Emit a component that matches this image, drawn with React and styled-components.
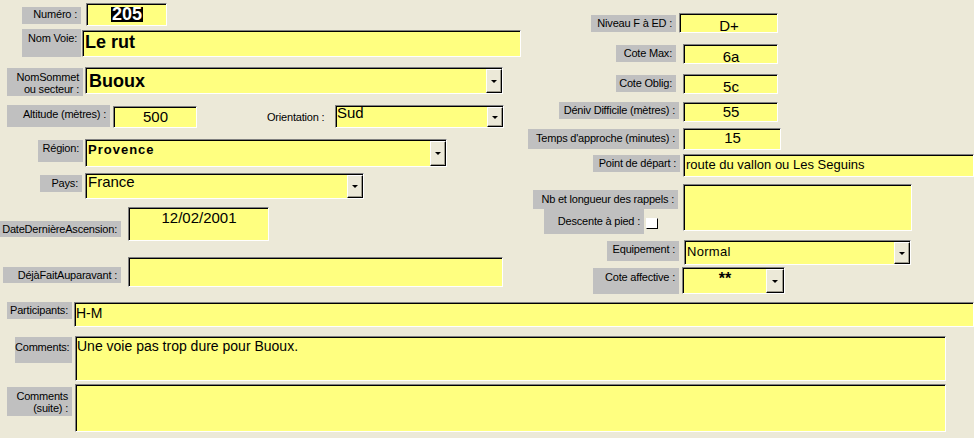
import React from "react";
import styled, { createGlobalStyle } from "styled-components";

const Global = createGlobalStyle`
  html, body { margin: 0; padding: 0; background: #ECE9D8; }
  body { font-family: "Liberation Sans", Arial, sans-serif; color: #000; }
`;

const Form = styled.div`
  width: 974px;
  height: 438px;
  overflow: hidden;
  background: #ECE9D8;
  display: flex;
  flex-direction: column;
`;

const Top = styled.div`
  display: flex;
  height: 294px;
  flex-shrink: 0;
`;

const Column = styled.div`
  display: flex;
  flex-direction: column;
  width: ${(p) => p.$w}px;
  padding-top: ${(p) => p.$pt || 0}px;
  flex-shrink: 0;
`;

const Bottom = styled.div`
  display: flex;
  flex-direction: column;
  margin-top: 8px;
`;

const Row = styled.div`
  display: flex;
  align-items: flex-start;
  height: ${(p) => p.$h}px;
  padding-left: ${(p) => p.$pl || 0}px;
  flex-shrink: 0;
`;

const Stack = styled.div`
  display: flex;
  flex-direction: column;
  width: ${(p) => p.$w}px;
  flex-shrink: 0;
`;

const SubRow = styled.div`
  display: flex;
  align-items: flex-start;
  padding-left: ${(p) => p.$pl || 0}px;
`;

const Label = styled.div`
  box-sizing: border-box;
  width: ${(p) => p.$w}px;
  height: ${(p) => p.$h}px;
  margin-top: ${(p) => p.$mt || 0}px;
  margin-left: ${(p) => p.$ml || 0}px;
  padding: ${(p) => p.$pt ?? 2}px 4px 0 0;
  background: #C0C0C0;
  color: #000;
  font-family: "Liberation Sans", Arial, sans-serif;
  font-size: 11px;
  letter-spacing: -0.2px;
  line-height: ${(p) => p.$lh || 13}px;
  text-align: right;
  white-space: nowrap;
  flex-shrink: 0;
`;

const Caption = styled.div`
  width: ${(p) => p.$w}px;
  margin-top: ${(p) => p.$mt || 0}px;
  margin-left: ${(p) => p.$ml || 0}px;
  font-family: "Liberation Sans", Arial, sans-serif;
  font-size: 11px;
  letter-spacing: -0.2px;
  line-height: 13px;
  white-space: nowrap;
  flex-shrink: 0;
`;

const Field = styled.div`
  box-sizing: border-box;
  width: ${(p) => p.$w}px;
  height: ${(p) => p.$h}px;
  margin-top: ${(p) => p.$mt || 0}px;
  margin-left: ${(p) => p.$ml || 0}px;
  background: #FFFF80;
  border: 1px solid;
  border-color: #808080 #ffffff #ffffff #808080;
  box-shadow: inset 1px 1px 0 #000;
  display: flex;
  align-items: flex-start;
  overflow: hidden;
  flex-shrink: 0;
`;

const Value = styled.span`
  flex: 1;
  min-width: 0;
  padding: ${(p) => p.$pt ?? 1}px 2px 0 ${(p) => p.$pl ?? 3}px;
  font-family: "Liberation Sans", Arial, sans-serif;
  font-size: ${(p) => p.$size || 14}px;
  font-weight: ${(p) => (p.$bold ? 700 : 400)};
  line-height: ${(p) => p.$lh || 14}px;
  letter-spacing: ${(p) => p.$ls || 0}px;
  text-align: ${(p) => p.$align || "left"};
  white-space: nowrap;
  color: #000;
`;

const Selected = styled.span`
  display: inline-block;
  background: #000;
  color: #fff;
  line-height: 15px;
  padding: 0 1px;
`;

const DropButton = styled.div`
  box-sizing: border-box;
  width: ${(p) => p.$w || 16}px;
  align-self: stretch;
  margin: 1px 0 0 0;
  background: #ECE9D8;
  border: 1px solid;
  border-color: #ffffff #000 #000 #ffffff;
  box-shadow: inset -1px -1px 0 #9d9a8c;
  display: flex;
  align-items: center;
  justify-content: center;
  flex-shrink: 0;
  &::after {
    content: "";
    width: 0;
    height: 0;
    border-left: 3px solid transparent;
    border-right: 3px solid transparent;
    border-top: 3px solid #000;
  }
`;

const Check = styled.div`
  box-sizing: border-box;
  width: 12px;
  height: 11px;
  margin-top: ${(p) => p.$mt || 0}px;
  margin-left: ${(p) => p.$ml || 0}px;
  background: #fff;
  border: 1px solid;
  border-color: #ffffff #000 #000 #ffffff;
  flex-shrink: 0;
`;

function Combo({ w, h, ml, mt, btn, children }) {
  return (
    <Field $w={w} $h={h} $ml={ml} $mt={mt}>
      {children}
      <DropButton $w={btn} />
    </Field>
  );
}

export default function App() {
  return (
    <>
      <Global />
      <Form>
        <Top>
          <Column $w={522} $pt={3}>
            <Row $h={26} $pl={22}>
              <Label $w={59} $h={17} $mt={4} $pt={1}>Numéro :</Label>
              <Field $w={81} $h={23} $ml={5}>
                <Value $size={18} $bold $align="center" $pt={3} $lh={15}>
                  <Selected>205</Selected>
                </Value>
              </Field>
            </Row>
            <Row $h={38} $pl={22}>
              <Label $w={59} $h={28} $pt={3}>Nom Voie:</Label>
              <Field $w={439} $h={27} $ml={1} $mt={1}>
                <Value $size={18} $bold $lh={20} $pt={1} $pl={2}>Le rut</Value>
              </Field>
            </Row>
            <Row $h={37} $pl={7}>
              <Label $w={76} $h={28} $mt={1} $pt={3} $lh={12}>
                NomSommet
                <br />
                ou secteur :
              </Label>
              <Combo w={418} h={27} ml={2}>
                <Value $size={18} $bold $lh={20} $pt={3} $pl={3}>Buoux</Value>
              </Combo>
            </Row>
            <Row $h={35} $pl={7}>
              <Label $w={103} $h={22} $mt={1} $pt={3}>Altitude (mètres) :</Label>
              <Field $w={84} $h={22} $ml={3} $mt={2}>
                <Value $align="center" $pt={3} $size={15}>500</Value>
              </Field>
              <Caption $w={63} $ml={70} $mt={7}>Orientation :</Caption>
              <Combo w={169} h={23} ml={5} mt={1}>
                <Value $pt={0} $pl={1} $size={15}>Sud</Value>
              </Combo>
            </Row>
            <Row $h={33} $pl={38}>
              <Label $w={45} $h={22} $mt={1} $pt={2}>Région:</Label>
              <Combo w={362} h={28} ml={2}>
                <Value $size={13} $bold $ls={1} $lh={16} $pt={2} $pl={2}>Provence</Value>
              </Combo>
            </Row>
            <Row $h={35} $pl={40}>
              <Label $w={42} $h={17} $mt={3} $pt={2}>Pays:</Label>
              <Combo w={279} h={26} ml={3} mt={1}>
                <Value $size={15} $pt={1} $pl={2}>France</Value>
              </Combo>
            </Row>
            <Row $h={50} $pl={0}>
              <Label $w={121} $h={16} $mt={14} $pt={2}>DateDernièreAscension:</Label>
              <Field $w={141} $h={34} $ml={7}>
                <Value $size={15} $align="center" $pt={3}>12/02/2001</Value>
              </Field>
            </Row>
            <Row $h={30} $pl={3}>
              <Label $w={118} $h={16} $mt={10} $pt={2}>DéjàFaitAuparavant :</Label>
              <Field $w={375} $h={30} $ml={7} />
            </Row>
          </Column>

          <Column $w={452} $pt={13}>
            <Row $h={31} $pl={69}>
              <Label $w={85} $h={17} $mt={2} $pt={2}>Niveau F à ED :</Label>
              <Field $w={99} $h={20} $ml={3}>
                <Value $size={15} $lh={16} $align="center" $pt={4}>D+</Value>
              </Field>
            </Row>
            <Row $h={30} $pl={94}>
              <Label $w={60} $h={17} $mt={1} $pt={2}>Cote Max:</Label>
              <Field $w={95} $h={20} $ml={7}>
                <Value $size={15} $lh={16} $align="center" $pt={4}>6a</Value>
              </Field>
            </Row>
            <Row $h={28} $pl={94}>
              <Label $w={60} $h={17} $mt={1} $pt={2}>Cote Oblig:</Label>
              <Field $w={95} $h={20} $ml={7}>
                <Value $size={15} $lh={16} $align="center" $pt={4}>5c</Value>
              </Field>
            </Row>
            <Row $h={26} $pl={37}>
              <Label $w={120} $h={17} $pt={2}>Déniv Difficile (mètres) :</Label>
              <Field $w={95} $h={20} $ml={4}>
                <Value $size={15} $lh={16} $align="center" $pt={1}>55</Value>
              </Field>
            </Row>
            <Row $h={26} $pl={6}>
              <Label $w={151} $h={20} $mt={1} $pt={3}>Temps d'approche (minutes) :</Label>
              <Field $w={98} $h={22} $ml={4}>
                <Value $size={15} $lh={16} $align="center" $pt={1}>15</Value>
              </Field>
            </Row>
            <Row $h={30} $pl={71}>
              <Label $w={87} $h={17} $mt={1} $pt={2}>Point de départ :</Label>
              <Field $w={291} $h={23} $ml={3}>
                <Value $size={13} $lh={15} $pt={2} $pl={2}>route du vallon ou Les Seguins</Value>
              </Field>
            </Row>
            <Row $h={56} $pl={11}>
              <Stack $w={145}>
                <Label $w={145} $h={19} $mt={6} $pt={3}>Nb et longueur des rappels :</Label>
                <SubRow $pl={11}>
                  <Label $w={100} $h={25} $pt={6}>Descente à pied :</Label>
                  <Check $ml={2} $mt={9} />
                </SubRow>
              </Stack>
              <Field $w={229} $h={47} $ml={5} />
            </Row>
            <Row $h={27} $pl={85}>
              <Label $w={72} $h={20} $mt={1} $pt={2}>Equipement :</Label>
              <Combo w={227} h={25} ml={5}>
                <Value $size={13} $lh={15} $pt={3} $pl={2} $ls={0.3}>Normal</Value>
              </Combo>
            </Row>
            <Row $h={27} $pl={71}>
              <Label $w={86} $h={26} $mt={1} $pt={3}>Cote affective :</Label>
              <Combo w={103} h={27} ml={3} btn={18}>
                <Value $size={16} $bold $lh={16} $align="center" $pt={3}>**</Value>
              </Combo>
            </Row>
          </Column>
        </Top>

        <Bottom>
          <Row $h={34} $pl={7}>
            <Label $w={65} $h={17} $pt={2}>Participants:</Label>
            <Field $w={900} $h={25} $ml={2}>
              <Value $size={14} $pt={3} $pl={1}>H-M</Value>
            </Field>
          </Row>
          <Row $h={48} $pl={15}>
            <Label $w={57} $h={26} $mt={1} $pt={4}>Comments:</Label>
            <Field $w={871} $h={45} $ml={3}>
              <Value $size={14} $pt={2} $pl={1}>Une voie pas trop dure pour Buoux.</Value>
            </Field>
          </Row>
          <Row $h={48} $pl={7}>
            <Label $w={65} $h={29} $mt={3} $pt={3} $lh={12}>
              Comments
              <br />
              (suite) :
            </Label>
            <Field $w={871} $h={48} $ml={3} />
          </Row>
        </Bottom>
      </Form>
    </>
  );
}
